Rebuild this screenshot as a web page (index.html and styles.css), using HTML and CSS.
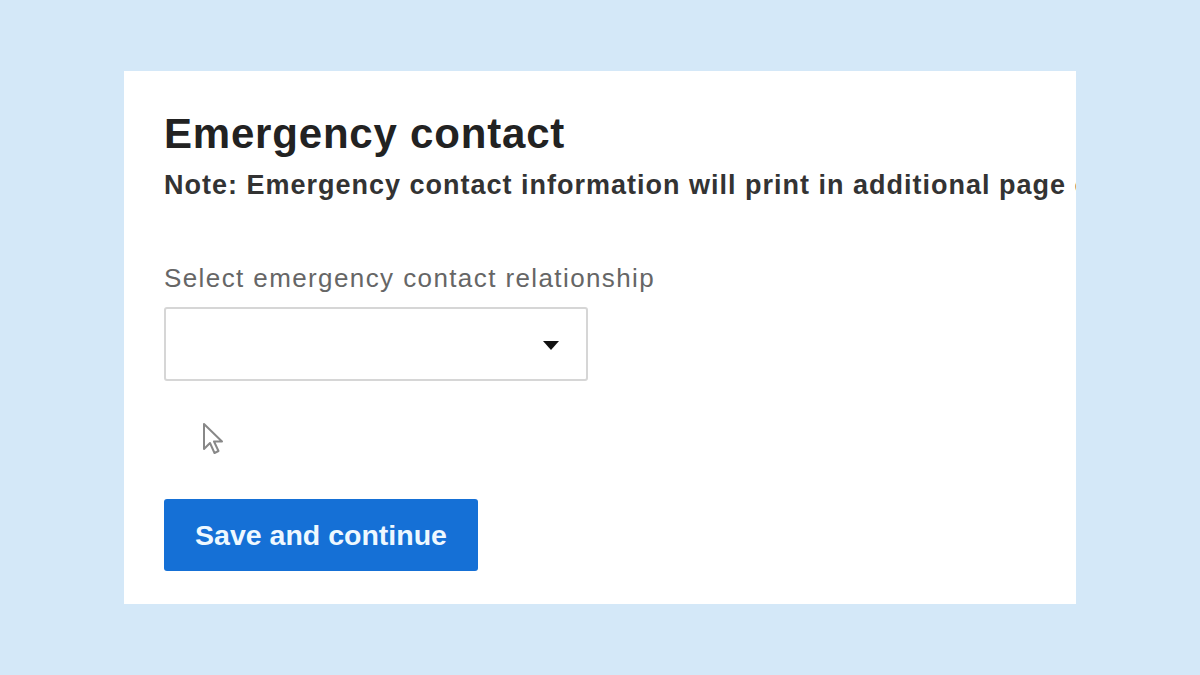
FILE: index.html
```html
<!DOCTYPE html>
<html lang="en">
<head>
<meta charset="utf-8">
<title>Emergency contact</title>
<link rel="stylesheet" href="styles.css">
</head>
<body>
  <main class="card">
    <h1 class="title">Emergency contact</h1>
    <p class="note">Note: Emergency contact information will print in additional page of the form</p>
    <label class="label" for="rel">Select emergency contact relationship</label>
    <div class="select" id="rel">
      <svg class="caret" width="18" height="11" viewBox="0 0 18 11"><path d="M1 1 H17 L9 10 Z" fill="#111"/></svg>
    </div>
    <div class="spacer">
      <svg class="cursor" width="22" height="34" viewBox="0 0 22 34"><path d="M2 2 L2 27 L8 21 L12.5 31 L16.5 29 L12 19.5 L20 19.5 Z" fill="#fff" stroke="#888" stroke-width="2" stroke-linejoin="round"/></svg>
    </div>
    <button class="btn">Save and continue</button>
  </main>
</body>
</html>
```
FILE: styles.css
```css
html, body {
  margin: 0;
  padding: 0;
}
body {
  background: #d4e8f8;
  width: 1200px;
  height: 675px;
  overflow: hidden;
  font-family: "Liberation Sans", Arial, sans-serif;
}
.card {
  margin: 71px 0 0 124px;
  width: 952px;
  height: 533px;
  background: #fff;
  box-sizing: border-box;
  padding: 43px 0 0 40px;
  overflow: hidden;
  display: flex;
  flex-direction: column;
  align-items: flex-start;
}
.title {
  margin: 0;
  font-size: 42px;
  line-height: 40px;
  font-weight: 700;
  letter-spacing: 0.8px;
  color: #222;
}
.note {
  margin: 19px 0 0;
  font-size: 27px;
  line-height: 25px;
  font-weight: 700;
  letter-spacing: 1px;
  color: #333;
  white-space: nowrap;
}
.label {
  margin-top: 68px;
  font-size: 26px;
  line-height: 24px;
  letter-spacing: 1.4px;
  color: #666;
}
.select {
  margin-top: 17px;
  width: 424px;
  height: 74px;
  box-sizing: border-box;
  border: 2px solid #d6d6d6;
  border-radius: 3px;
  display: flex;
  align-items: center;
  justify-content: flex-end;
  padding-right: 26px;
}
.caret {
  display: block;
  margin-top: 2px;
}
.spacer {
  position: relative;
  height: 118px;
  width: 100px;
}
.cursor {
  position: absolute;
  left: 38px;
  top: 41px;
}
.btn {
  width: 314px;
  height: 72px;
  border: none;
  border-radius: 3px;
  background: #1570d6;
  color: #eef8ff;
  font-family: "Liberation Sans", Arial, sans-serif;
  font-size: 28.5px;
  font-weight: 700;
  padding: 0;
}
```
